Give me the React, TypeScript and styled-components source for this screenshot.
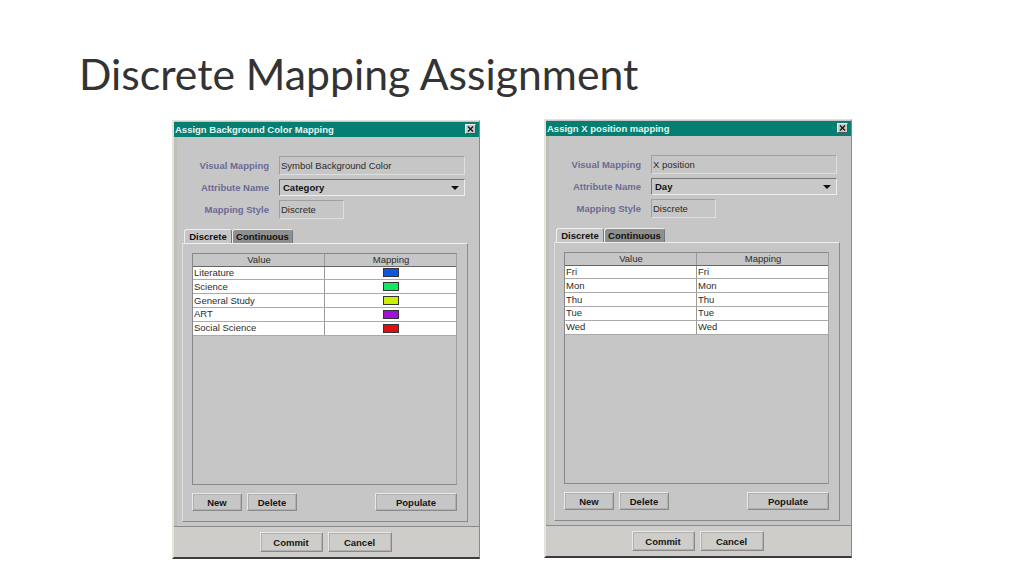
import * as React from 'react';
import styled, { createGlobalStyle } from 'styled-components';

const GlobalStyle = createGlobalStyle`
  html, body {
    margin: 0;
    padding: 0;
    background: #fff;
    overflow: hidden;
  }
`;

const Slide = styled.div`
  width: 1024px;
  height: 576px;
  overflow: hidden;
  box-sizing: border-box;
  padding: 49px 0 0 79px;
  font-family: "Liberation Sans", Arial, sans-serif;
`;

const Title = styled.h1`
  margin: 0;
  height: 50px;
  font-family: Lato, "Open Sans", sans-serif;
  font-weight: 400;
  font-size: 42.7px;
  line-height: 50px;
  color: #333;
  white-space: nowrap;
`;

const Windows = styled.div`
  display: flex;
  align-items: flex-start;
  gap: 64px;
  margin: 21px 0 0 93px;
`;

const Window = styled.div<{ $lift: number }>`
  width: 308px;
  height: 439px;
  box-sizing: border-box;
  margin-top: ${({ $lift }) => -$lift}px;
  display: flex;
  flex-direction: column;
  background: #c6c6c6;
  border: 1px solid #e4e4da;
  border-left-width: 2px;
  border-bottom: 2px solid #3c3c3c;
  border-right: 1px solid #8a8a8a;
`;

const TitleBar = styled.div`
  height: 15px;
  margin-top: 1px;
  flex: none;
  display: flex;
  align-items: center;
  justify-content: space-between;
  padding: 0 3px 1px 1px;
  box-sizing: border-box;
  background: #047f72;
  color: #e8f4f0;
  font-size: 9.5px;
  font-weight: bold;
`;

const CloseBox = styled.div`
  width: 11px;
  height: 10px;
  display: flex;
  align-items: center;
  justify-content: center;
  background: #c8c8c8;
  border: 1px solid;
  border-color: #eee #555 #555 #eee;
  box-sizing: border-box;
`;

const Body = styled.div`
  flex: 1;
  display: flex;
  flex-direction: column;
  padding: 19px 8px 0 8px;
  border-bottom: 1px solid #8a8a8a;
  box-shadow: inset 3px 0 0 #c0c0b8;
`;

const FormRow = styled.div`
  display: flex;
  align-items: center;
  margin-bottom: 4px;
`;

const Label = styled.div`
  width: 87px;
  flex: none;
  text-align: right;
  margin-right: 10px;
  color: #6b6b96;
  font-size: 9.5px;
  font-weight: bold;
`;

const Field = styled.div<{ $w: number }>`
  width: ${({ $w }) => $w}px;
  height: 19px;
  box-sizing: border-box;
  padding: 0 1px;
  display: flex;
  align-items: center;
  border: 1px solid #a0a0a0;
  border-right-color: #dedede;
  border-bottom-color: #dedede;
  color: #2a2a2a;
  font-size: 9.5px;
`;

const Combo = styled.div`
  width: 186px;
  height: 17px;
  box-sizing: border-box;
  padding: 0 5px 0 3px;
  display: flex;
  align-items: center;
  justify-content: space-between;
  background: #c8c8c8;
  border: 1px solid;
  border-color: #777 #eee #eee #777;
  color: #111;
  font-size: 9.5px;
  font-weight: bold;
`;

const Arrow = styled.div`
  width: 0;
  height: 0;
  border-left: 4px solid transparent;
  border-right: 4px solid transparent;
  border-top: 4px solid #111;
`;

const Tabs = styled.div`
  display: flex;
  margin: 6px 0 0 2px;
  height: 14px;
`;

const Tab = styled.div<{ $active?: boolean; $w: number }>`
  width: ${({ $w }) => $w}px;
  box-sizing: border-box;
  display: flex;
  align-items: center;
  justify-content: center;
  border-radius: 3px 3px 0 0;
  background: ${({ $active }) => ($active ? '#c6c6c6' : '#8f8f8f')};
  border-top: 1px solid #eee;
  border-left: 1px solid #eee;
  border-right: 1px solid #777;
  color: #111;
  font-size: 9.5px;
  font-weight: bold;
`;

const TabPanel = styled.div`
  width: 286px;
  height: 279px;
  box-sizing: border-box;
  display: flex;
  flex-direction: column;
  padding: 9px 10px 10px 9px;
  border: 1px solid #8a8a8a;
  border-top-color: #eee;
  border-left-color: #e0e0e0;
`;

const Table = styled.div`
  flex: 1;
  display: flex;
  flex-direction: column;
  border: 1px solid #888;
  border-right-color: #a0a0a0;
`;

const Row = styled.div<{ $head?: boolean }>`
  display: grid;
  grid-template-columns: 131px 1fr;
  height: ${({ $head }) => ($head ? 12.6 : 13.8)}px;
  box-sizing: border-box;
  background: ${({ $head }) => ($head ? '#c6c6c6' : '#fff')};
  border-bottom: 1px solid ${({ $head }) => ($head ? '#666' : '#aaa')};
`;

const Cell = styled.div<{ $center?: boolean }>`
  display: flex;
  align-items: center;
  justify-content: ${({ $center }) => ($center ? 'center' : 'flex-start')};
  padding-left: 1px;
  color: #2c2c2c;
  font-size: 9.5px;
  line-height: 12px;
  overflow: hidden;
  & + & {
    border-left: 1px solid #999;
  }
`;

const Swatch = styled.div<{ $color: string }>`
  width: 16px;
  height: 9px;
  box-sizing: border-box;
  background: ${({ $color }) => $color};
  border: 1px solid #333;
`;

const ButtonRow = styled.div`
  display: flex;
  gap: 5px;
  margin-top: 8px;
`;

const Button = styled.div<{ $w: number; $push?: boolean }>`
  width: ${({ $w }) => $w}px;
  height: 18px;
  box-sizing: border-box;
  margin-left: ${({ $push }) => ($push ? 'auto' : '0')};
  display: flex;
  align-items: center;
  justify-content: center;
  border: 1px solid;
  border-color: #e8e8e8 #8a8a8a #8a8a8a #e8e8e8;
  box-shadow: 0 0 0 1px #b0b0b0 inset;
  color: #151515;
  font-size: 9.5px;
  font-weight: bold;
`;

const Footer = styled.div`
  height: 30px;
  flex: none;
  display: flex;
  align-items: center;
  justify-content: center;
  gap: 5px;
  padding-right: 2px;
  background: #cecdca;
`;

const FooterButton = styled(Button)`
  height: 20px;
`;

interface MappingRow {
  value: string;
  mapping?: string;
  color?: string;
}

interface MappingWindow {
  title: string;
  visual: string;
  attribute: string;
  lift: number;
  rows: MappingRow[];
}

const windows: MappingWindow[] = [
  {
    title: 'Assign Background Color Mapping',
    visual: 'Symbol Background Color',
    attribute: 'Category',
    lift: 0,
    rows: [
      { value: 'Literature', color: '#0f55e0' },
      { value: 'Science', color: '#10e860' },
      { value: 'General Study', color: '#c8f000' },
      { value: 'ART', color: '#a010d8' },
      { value: 'Social Science', color: '#e00f0f' }
    ]
  },
  {
    title: 'Assign X position mapping',
    visual: 'X position',
    attribute: 'Day',
    lift: 1,
    rows: [
      { value: 'Fri', mapping: 'Fri' },
      { value: 'Mon', mapping: 'Mon' },
      { value: 'Thu', mapping: 'Thu' },
      { value: 'Tue', mapping: 'Tue' },
      { value: 'Wed', mapping: 'Wed' }
    ]
  }
];

const App = () => (
  <Slide>
    <GlobalStyle />
    <Title>Discrete Mapping Assignment</Title>
    <Windows>
      {windows.map(win => (
        <Window key={win.title} $lift={win.lift}>
          <TitleBar>
            {win.title}
            <CloseBox>
              <svg width="7" height="6" viewBox="0 0 7 6">
                <path d="M1 0.5 L6 5.5 M6 0.5 L1 5.5" stroke="#111" strokeWidth="1.3" />
              </svg>
            </CloseBox>
          </TitleBar>
          <Body>
            <FormRow>
              <Label>Visual Mapping</Label>
              <Field $w={186}>{win.visual}</Field>
            </FormRow>
            <FormRow>
              <Label>Attribute Name</Label>
              <Combo>
                {win.attribute}
                <Arrow />
              </Combo>
            </FormRow>
            <FormRow>
              <Label>Mapping Style</Label>
              <Field $w={65}>Discrete</Field>
            </FormRow>
            <Tabs>
              <Tab $active $w={48}>Discrete</Tab>
              <Tab $w={61}>Continuous</Tab>
            </Tabs>
            <TabPanel>
              <Table>
                <Row $head>
                  <Cell $center>Value</Cell>
                  <Cell $center>Mapping</Cell>
                </Row>
                {win.rows.map(row => (
                  <Row key={row.value}>
                    <Cell>{row.value}</Cell>
                    {row.color ? (
                      <Cell $center>
                        <Swatch $color={row.color} />
                      </Cell>
                    ) : (
                      <Cell>{row.mapping}</Cell>
                    )}
                  </Row>
                ))}
              </Table>
              <ButtonRow>
                <Button $w={50}>New</Button>
                <Button $w={50}>Delete</Button>
                <Button $w={82} $push>Populate</Button>
              </ButtonRow>
            </TabPanel>
          </Body>
          <Footer>
            <FooterButton $w={63}>Commit</FooterButton>
            <FooterButton $w={64}>Cancel</FooterButton>
          </Footer>
        </Window>
      ))}
    </Windows>
  </Slide>
);

export default App;
